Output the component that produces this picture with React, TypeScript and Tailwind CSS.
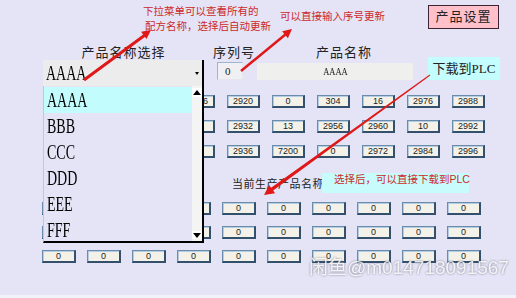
import React from 'react';

// cells under the open drop list are left blank, only their edges show
const topRows: string[][] = [
  ['', '', '', '2916', '2920', '0', '304', '16', '2976', '2988'],
  ['', '', '', '12', '2932', '13', '2956', '2960', '10', '2992'],
  ['', '', '', '0', '2936', '7200', '0', '2972', '2984', '2996'],
];

const bottomRows: string[][] = [
  ['', '', '', '', '0', '0', '0', '0', '0', '0'],
  ['', '', '', '', '0', '0', '0', '0', '0', '0'],
  ['0', '0', '0', '0', '0', '0', '0', '0', '0', '0'],
];

const items = ['AAAA', 'BBB', 'CCC', 'DDD', 'EEE', 'FFF'];

const Cell: React.FC<{ value: string; wide?: boolean }> = ({ value, wide }) => (
  <div
    className={`${wide ? 'w-[34px]' : 'w-[33px]'} h-[13px] flex items-center justify-center border border-[#6b8bab] border-r-2 border-b-2 border-r-[#33506c] border-b-[#33506c] bg-[#f4f2e8] shadow-[inset_1px_1px_0_#b4cce4] text-[9px] leading-none text-[#222]`}
  >
    {value}
  </div>
);

const Arrows: React.FC = () => (
  <svg className="absolute inset-0 pointer-events-none" width="516" height="298">
    <line x1="84" y1="80" x2="145" y2="35" stroke="#e01818" strokeWidth="3" />
    <polygon points="151,30 146.5,38.9 141.1,31.7" fill="#e01818" />
    <line x1="241" y1="71" x2="286" y2="34" stroke="#e01818" strokeWidth="2.5" />
    <polygon points="292,29 287.9,38.2 282.1,31.2" fill="#e01818" />
    <polygon
      points="430.29,75.41 273.15,190.56 275.03,193.15 264,195 269.17,185.05 271.05,187.64 429.71,74.59"
      fill="#e01818"
    />
  </svg>
);

const DropList: React.FC = () => (
  <div className="absolute left-[43px] top-[86px] w-[161px] h-[157px] flex bg-[#e4e4f6] border-l border-l-[#c4c4dc] border-r-2 border-r-black border-b-2 border-b-black">
    <div className="flex-1 pt-[1px]">
      {items.map((it, i) => (
        <div
          key={it}
          className={`h-[26px] flex items-center pl-[3px] ${i === 0 ? 'bg-[#c2fcfc]' : ''}`}
        >
          <span className="inline-block origin-left scale-x-[0.7] font-['Liberation_Serif',serif] text-[20px] leading-none text-black">
            {it}
          </span>
        </div>
      ))}
    </div>
    <div className="w-[10px] bg-[#f4f4f4] flex flex-col justify-between py-[2px]">
      <div className="h-[9px] flex items-center justify-center bg-white">
        <div className="w-0 h-0 border-l-[4px] border-r-[4px] border-b-[5px] border-l-transparent border-r-transparent border-b-black" />
      </div>
      <div className="h-[8px] flex items-center justify-center bg-white">
        <div className="w-0 h-0 border-l-[4px] border-r-[4px] border-t-[5px] border-l-transparent border-r-transparent border-t-black" />
      </div>
    </div>
  </div>
);

export default function App() {
  return (
    <div className="relative w-[516px] h-[298px] overflow-hidden flex flex-col bg-[#e4e4f6] font-['Liberation_Sans','Noto_Sans_CJK_SC',sans-serif] text-[#222]">
      {/* notes + settings button */}
      <div className="flex items-start h-[45px] shrink-0">
        <div className="ml-[143px] mt-[4px] w-[137px] text-[10.5px] leading-[15px] text-[#cc2a2a] whitespace-nowrap">
          <div>下拉菜单可以查看所有的</div>
          <div className="pl-[2px]">配方名称，选择后自动更新</div>
        </div>
        <div className="mt-[9px] text-[10.5px] leading-[14px] text-[#cc2a2a] whitespace-nowrap">
          可以直接输入序号更新
        </div>
        <div className="ml-auto mr-[17px] mt-[5px] w-[71px] h-[24px] flex items-center justify-center bg-[#ffc0ca] border border-[#3a2434] text-[13px] tracking-[1px]">
          产品设置
        </div>
      </div>

      {/* labels */}
      <div className="flex h-[15px] shrink-0 text-[13px] leading-[15px] tracking-[1px]">
        <div className="ml-[43px] w-[161px] text-center">产品名称选择</div>
        <div className="ml-[9px]">序列号</div>
        <div className="ml-[61px]">产品名称</div>
      </div>

      {/* controls */}
      <div className="flex items-start h-[26px] shrink-0">
        <div className="relative ml-[43px] w-[161px] h-[26px] flex items-center pl-[3px] bg-[#ececec] border-r-2 border-black">
          <span className="inline-block origin-left scale-x-[0.7] font-['Liberation_Serif',serif] text-[20px] leading-none text-black">
            AAAA
          </span>
          <div className="absolute right-[3px] top-[12px] w-0 h-0 border-l-[2px] border-r-[2px] border-t-[3px] border-l-transparent border-r-transparent border-t-black" />
        </div>
        <div className="ml-[13px] mt-[2px] w-[26px] h-[18px] flex items-center pl-[7px] bg-[#f0f0f4] border border-t-[#9cb6d2] border-l-[#9cb6d2] border-r-[#e6e6ee] border-b-[#e6e6ee] font-['Liberation_Serif',serif] text-[11px]">
          0
        </div>
        <div className="ml-[14px] mt-[3px] w-[156px] h-[17px] flex items-center justify-center bg-[#efefed]">
          <span className="inline-block scale-x-[0.85] font-['Liberation_Serif',serif] text-[10px] leading-none">
            AAAA
          </span>
        </div>
        <div className="ml-[15px] -mt-[3px] w-[72px] h-[23px] flex items-center justify-center bg-[#c4fdfd] text-[13px] font-['Liberation_Serif','Noto_Sans_CJK_SC',serif]">
          下载到PLC
        </div>
      </div>

      {/* top grid */}
      <div className="mt-[9px] pl-[47px] flex flex-col gap-[12px] shrink-0">
        {topRows.map((row, r) => (
          <div key={r} className="flex gap-[12px]">
            {row.map((v, c) => (
              <Cell key={c} value={v} />
            ))}
          </div>
        ))}
      </div>

      {/* current product label */}
      <div className="mt-[15px] flex items-start h-[20px] shrink-0">
        <div className="ml-[232px] mt-[5px] text-[11px] leading-[12px] tracking-[0.5px] whitespace-nowrap">
          当前生产产品名称
        </div>
        <div className="ml-[-2px] w-[147px] h-[20px] bg-[#c8fcfc] pl-[12px] text-[10.5px] leading-[13px] text-[#cc2a2a] whitespace-nowrap">
          选择后，可以直接下载到PLC
        </div>
      </div>

      {/* bottom grid */}
      <div className="mt-[9px] pl-[42px] flex flex-col gap-[11px] shrink-0">
        {bottomRows.map((row, r) => (
          <div key={r} className="flex gap-[11px]">
            {row.map((v, c) => (
              <Cell key={c} value={v} wide />
            ))}
          </div>
        ))}
      </div>

      <div className="mt-auto h-[3px] bg-[#f2f2fa]" />

      <DropList />
      <Arrows />

      <div className="absolute left-[309px] top-[257px] text-[19px] leading-[22px] text-white/85 drop-shadow-[0_0_1px_rgba(60,60,80,0.7)] whitespace-nowrap pointer-events-none">
        闲鱼@m014718091567
      </div>
    </div>
  );
}
